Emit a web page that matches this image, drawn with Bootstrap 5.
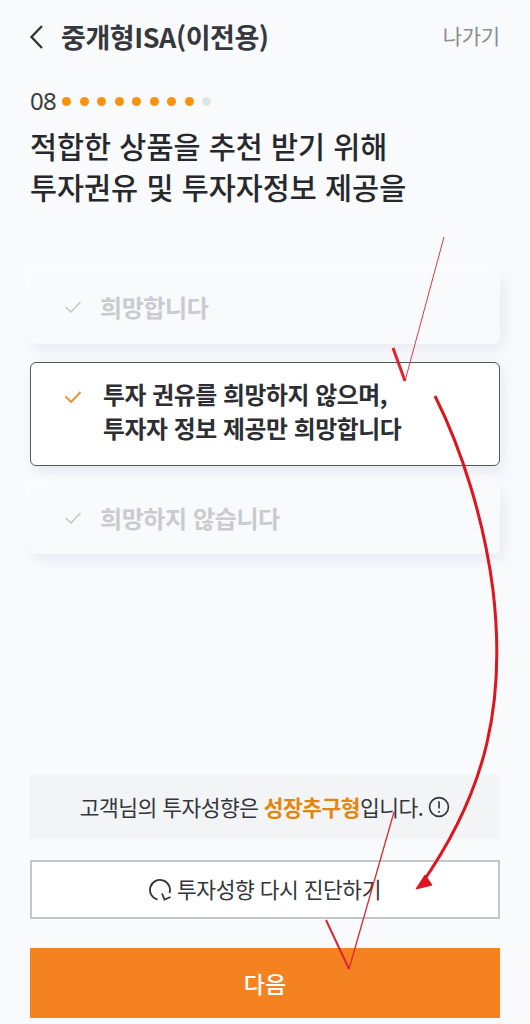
<!DOCTYPE html>
<html lang="ko">
<head>
<meta charset="utf-8">
<link href="https://cdn.jsdelivr.net/npm/bootstrap@5.3.0/dist/css/bootstrap.min.css" rel="stylesheet">
<style>
html,body{height:100%;}
body{background:#f9fafc;font-family:"Noto Sans CJK KR","Noto Sans",sans-serif;color:#2f3237;overflow:hidden;}
.screen{position:relative;width:530px;height:1024px;padding:0 30px;}
.topbar{height:74px;}
.back-ico{width:16px;height:26px;margin-right:16px;margin-left:-1px;}
.top-title{font-size:27px;font-weight:700;line-height:1;color:#35383d;letter-spacing:-.45px;margin-top:-2px;}
.exit-link{font-size:21px;color:#8a8d91;letter-spacing:-.2px;margin-top:-2px;}
.steps{height:28px;margin-top:13px;}
.step-no{font-size:24px;line-height:1;color:#3a3d42;width:29px;letter-spacing:-.8px;font-family:"Noto Sans",sans-serif;}
.dot-row{gap:8.500px;margin-left:3px;}
.dot-item{width:9px;height:9px;border-radius:50%;background:#f7930f;}
.dot-off{background:#e3e4e6;}
.headline{font-size:29.400px;font-weight:500;line-height:41px;margin:10px 0 0;color:#26282c;}
.choices{margin-top:65px;gap:18px;}
.choice{background:#f9fafc;border-radius:6px;box-shadow:4px 6px 14px rgba(190,195,225,.28),-4px -4px 10px #fff;height:72px;padding:0 0 3px 34px;font-size:24px;font-weight:700;color:#c9cbce;letter-spacing:-.4px;}
.choice-short{height:70px;}
.choice svg{width:18px;height:14px;flex:none;margin-right:18px;}
.choice-on{background:#fff;border:1px solid #55585c;height:104px;color:#2c2e33;font-size:23.800px;line-height:34px;box-shadow:3px 6px 14px rgba(190,195,225,.3);padding:0 0 6px 33px;}
.choice-on svg{margin-right:21px;margin-top:-28px;}
.spacer-gap{height:221px;}
.info-bar{background:#f3f4f6;height:64px;font-size:21.500px;letter-spacing:-.55px;color:#33363b;}
.info-hi{color:#e5860c;font-weight:700;}
.info-ico{width:22px;height:22px;margin-left:5px;}
.retry-btn{height:59px;margin-top:21px;background:#fff;border:2px solid #c4c6ca;font-size:21.500px;letter-spacing:-.5px;color:#33363b;}
.retry-btn svg{width:24px;height:24px;margin-right:4px;}
.next-btn{height:70px;margin-top:29px;background:#f58220;color:#fff;font-size:23px;font-weight:500;}
.marks{position:absolute;left:0;top:0;width:530px;height:1024px;pointer-events:none;}
</style>
</head>
<body>
<div class="screen">
  <div class="topbar d-flex align-items-center">
    <svg class="back-ico" viewBox="0 0 16 26" fill="none" stroke="#33363b" stroke-width="2.400"><path d="M13 2 2.500 13 13 24"/></svg>
    <span class="top-title">중개형ISA(이전용)</span>
    <span class="exit-link ms-auto">나가기</span>
  </div>
  <div class="steps d-flex align-items-center">
    <span class="step-no">08</span>
    <div class="dot-row d-flex">
      <i class="dot-item"></i><i class="dot-item"></i><i class="dot-item"></i><i class="dot-item"></i><i class="dot-item"></i><i class="dot-item"></i><i class="dot-item"></i><i class="dot-item"></i><i class="dot-item dot-off"></i>
    </div>
  </div>
  <h1 class="headline">적합한 상품을 추천 받기 위해<br>투자권유 및 투자자정보 제공을</h1>
  <div class="choices d-flex flex-column">
    <div class="choice d-flex align-items-center">
      <svg viewBox="0 0 18 14" fill="none" stroke="#c4c6c9" stroke-width="1.600"><path d="M1.500 7 7 12 16.500 2"/></svg>희망합니다
    </div>
    <div class="choice choice-on d-flex align-items-center">
      <svg viewBox="0 0 18 14" fill="none" stroke="#f0923a" stroke-width="2"><path d="M1.500 6.500 7 12 16.500 2"/></svg>
      <span>투자 권유를 희망하지 않으며,<br>투자자 정보 제공만 희망합니다</span>
    </div>
    <div class="choice choice-short d-flex align-items-center">
      <svg viewBox="0 0 18 14" fill="none" stroke="#c4c6c9" stroke-width="1.600"><path d="M1.500 7 7 12 16.500 2"/></svg>희망하지 않습니다
    </div>
  </div>
  <div class="spacer-gap"></div>
  <div class="info-bar d-flex align-items-center justify-content-center">
    <span>고객님의 투자성향은 <span class="info-hi">성장추구형</span>입니다.</span>
    <svg class="info-ico" viewBox="0 0 21 21" fill="none" stroke="#33363b" stroke-width="1.600"><circle cx="10.500" cy="10.500" r="9"/><path d="M10.500 5v7M10.500 14.200v1.800"/></svg>
  </div>
  <div class="retry-btn d-flex align-items-center justify-content-center">
    <svg viewBox="0 0 24 24" fill="none" stroke="#33363b" stroke-width="1.800"><path d="M8.500 21.600A10 10 0 1 1 20.500 15"/><path d="M13 15.500 15.500 21.500 21.500 19"/></svg>
    <span>투자성향 다시 진단하기</span>
  </div>
  <div class="next-btn d-flex align-items-center justify-content-center">다음</div>
  <svg class="marks" viewBox="0 0 530 1024" fill="none">
    <path d="M444 237 405 381" stroke="#dd3a4a" stroke-width="1"/>
    <path d="M393 348 405 381" stroke="#e3202e" stroke-width="3"/>
    <path d="M435 396C462 450 484 520 493 590 506 700 488 790 420 886" stroke="#e0141f" stroke-width="3"/>
    <path d="M416 889 425 875 432 885Z" fill="#e0141f" stroke="#e0141f" stroke-width="1"/>
    <path d="M394 812 349 969" stroke="#dd2a38" stroke-width="1.300"/>
    <path d="M326 920 349 969" stroke="#d92533" stroke-width="2"/>
  </svg>
</div>
<script src="https://cdn.jsdelivr.net/npm/bootstrap@5.3.0/dist/js/bootstrap.bundle.min.js"></script>
</body>
</html>
